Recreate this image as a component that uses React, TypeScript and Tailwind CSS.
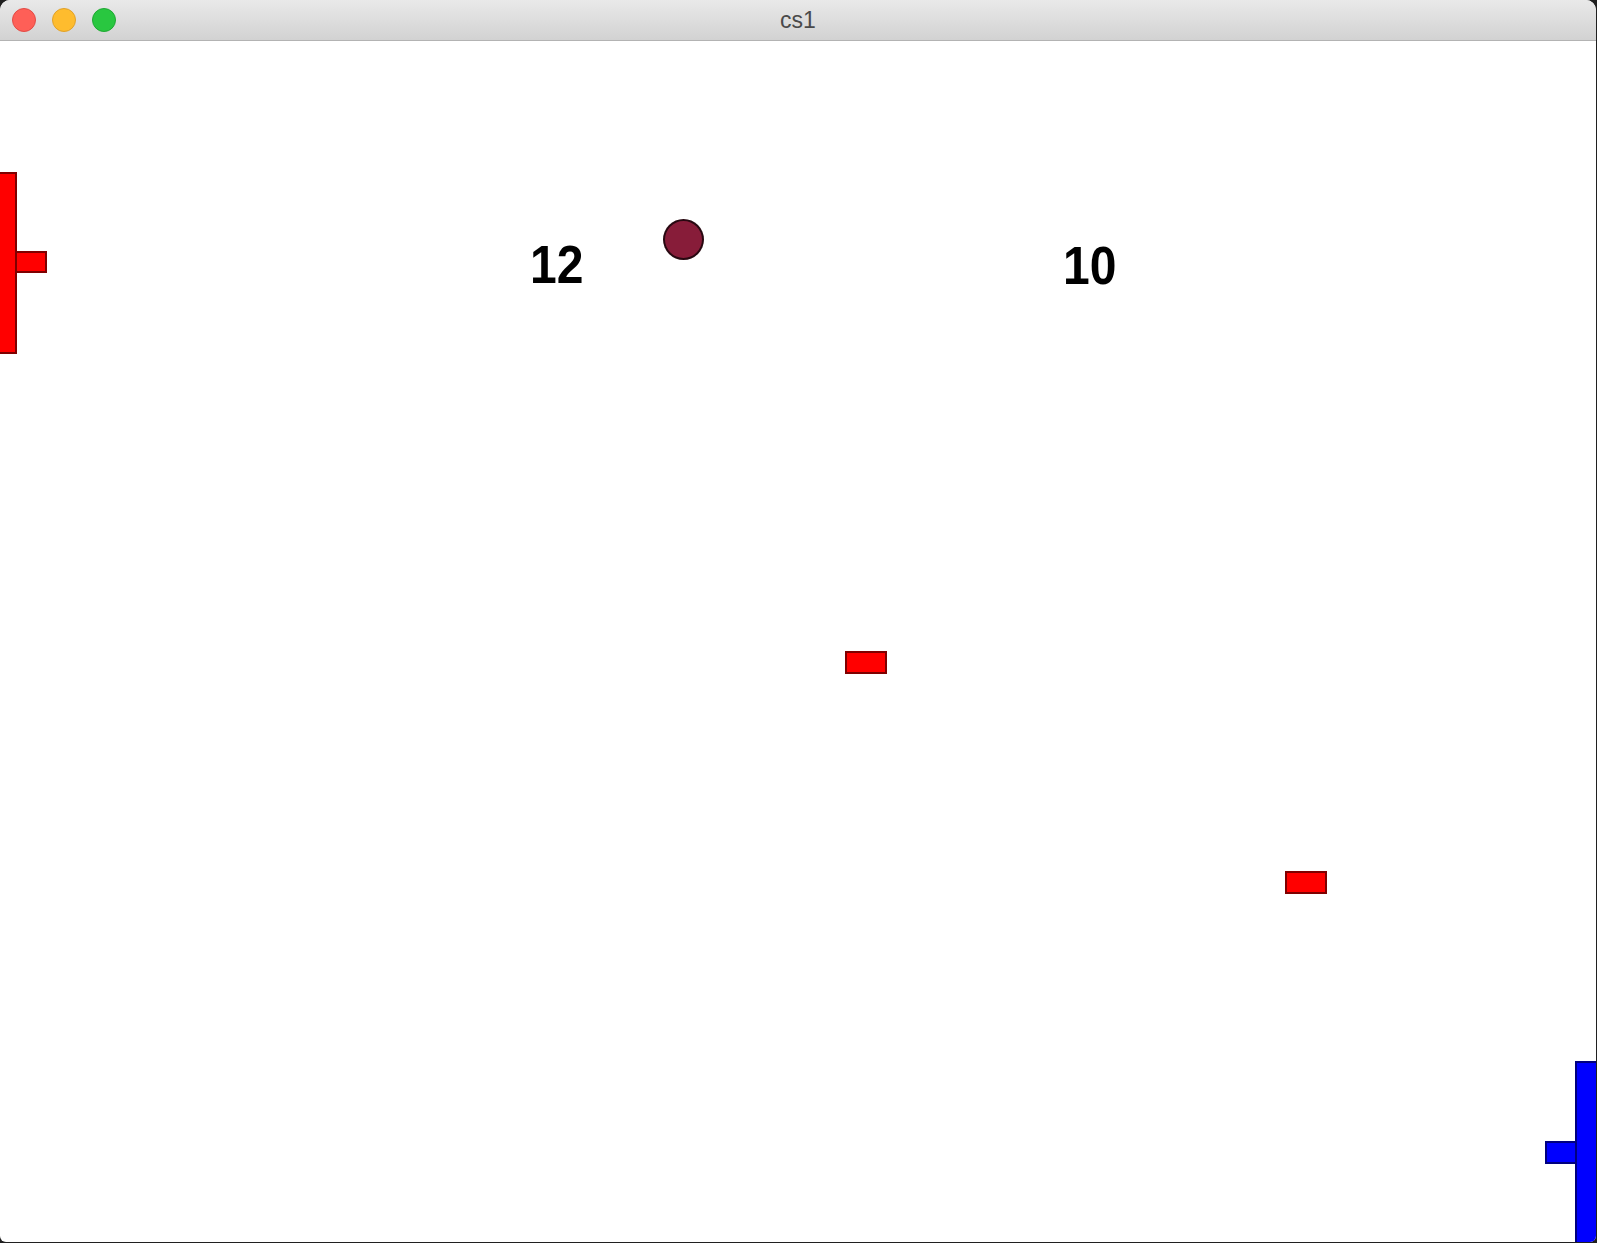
const dot = 'h-[24px] w-[24px] rounded-full border';

function TitleBar() {
  return (
    <div className="relative flex h-[41px] shrink-0 items-center border-b border-[#b3b3b3] bg-gradient-to-b from-[#e9e9e9] to-[#d2d2d2] px-[12px]">
      <div className="flex gap-[16px]">
        <div className={`${dot} border-[#e24b45] bg-[#fe5f57]`} />
        <div className={`${dot} border-[#e0a12a] bg-[#febc2e]`} />
        <div className={`${dot} border-[#1fa833] bg-[#29c740]`} />
      </div>
      <div className="absolute inset-0 flex items-center justify-center font-['Liberation_Sans',Arial,sans-serif] text-[23px] text-[#4a4a4a]">
        cs1
      </div>
    </div>
  );
}

const block = 'absolute border-2 border-black/50';
const score = 'absolute origin-left scale-x-[0.89] text-[54px] font-bold leading-none text-black';

export default function App() {
  return (
    <div className="h-[1243px] w-[1597px] overflow-hidden bg-[#202020]">
      <div className="flex h-[1242px] w-[1596px] flex-col overflow-hidden rounded-b-[6px] rounded-t-[10px] bg-white">
        <TitleBar />
        {/* game canvas */}
        <div className="relative flex-1 overflow-hidden font-['Liberation_Sans',Arial,sans-serif]">
          {/* red player */}
          <div className={`${block} left-[-2px] top-[131px] h-[182px] w-[19px] bg-[#ff0000]`} />
          <div className={`${block} left-[15px] top-[210px] h-[22px] w-[32px] bg-[#ff0000]`} />

          {/* scores */}
          <div className={`${score} left-[530px] top-[196px]`}>12</div>
          <div className={`${score} left-[1063px] top-[197px]`}>10</div>

          {/* ball */}
          <div className="absolute left-[663px] top-[178px] h-[41px] w-[41px] rounded-full border-2 border-black/70 bg-[#871c39]" />

          {/* bullets */}
          <div className={`${block} left-[845px] top-[610px] h-[23px] w-[42px] bg-[#ff0000]`} />
          <div className={`${block} left-[1285px] top-[830px] h-[23px] w-[42px] bg-[#ff0000]`} />

          {/* blue player */}
          <div className={`${block} left-[1545px] top-[1100px] h-[23px] w-[32px] bg-[#0000ff]`} />
          <div className={`${block} left-[1575px] top-[1020px] h-[200px] w-[24px] bg-[#0000ff]`} />
        </div>
      </div>
    </div>
  );
}
